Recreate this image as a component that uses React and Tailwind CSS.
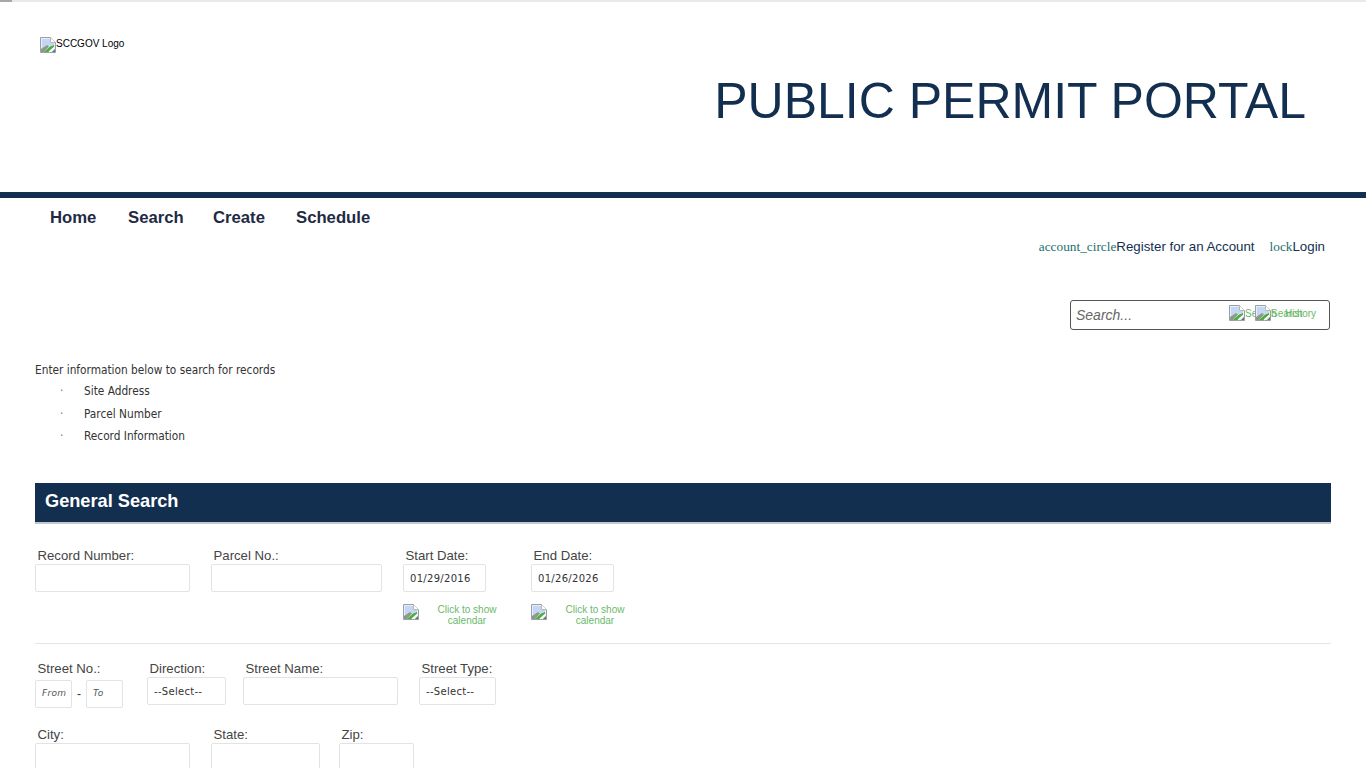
const sans = "font-['Liberation_Sans',Arial,sans-serif]";

function Broken({ className = "" }) {
  return (
    <svg width="16" height="16" viewBox="0 0 16 16" className={"block shrink-0 " + className}>
      <path d="M0.5 0.5H10.5L15.5 5.5V15.5H0.5Z" fill="#e6eefb" stroke="#9aa0a6" />
      <path d="M10.5 0.5V5.5H15.5" fill="#fff" stroke="#b4b8bd" />
      <path d="M2 2H10V6H14V8L9 9L2 13Z" fill="#c3d6f2" />
      <path d="M1 15V12L7 8L9 9.5L4 15Z" fill="#8d9a8a" />
      <path d="M4 15L10 9.5L14 8V10.5L9 15Z" fill="#4cae3c" />
      <path d="M9 15L14 10.5" stroke="#fff" strokeWidth="1.2" />
      <path d="M12 15L15 12V15Z" fill="#6a6f6a" />
    </svg>
  );
}

function Label({ children, className = "" }) {
  return <div className={"text-[13.2px] leading-[15px] whitespace-nowrap text-[#444] pl-[2.5px] " + className}>{children}</div>;
}

function Box({ className = "", children }) {
  return (
    <div className={"h-[28px] border border-[#e3e3e3] rounded-[2px] bg-white flex items-center px-[6px] text-[10px] tracking-[0.3px] text-[#333] font-['DejaVu_Sans',sans-serif] " + className}>
      {children}
    </div>
  );
}

function DateField({ label, value, className = "" }) {
  return (
    <div className={"w-[83px] " + className}>
      <Label>{label}</Label>
      <Box className="w-[83px] mt-[1px]">{value}</Box>
      <div className="flex mt-[12px] w-[110px]">
        <Broken />
        <div className="text-[10px] leading-[11px] text-[#6ab96a] text-center ml-[8px] w-[80px]">Click to show calendar</div>
      </div>
    </div>
  );
}

export default function App() {
  return (
    <div className={"h-screen overflow-hidden bg-white " + sans}>
      <div className="h-[2px] bg-[#e9e9e9] flex">
        <div className="w-[12px] bg-[#a8a8a8]" />
      </div>
      <header className="h-[190px] flex justify-between relative">
        <div className="pl-[40px] pt-[35px] flex items-start">
          <Broken />
          <span className="text-[10px] leading-[13px] text-black">SCCGOV Logo</span>
        </div>
        <h1 className="pr-[60px] pt-[69px] text-[50px] leading-[60px] text-[#122f50] font-normal">PUBLIC PERMIT PORTAL</h1>
      </header>
      <div className="h-[6px] bg-[#122f50]" />
      <nav className="flex pl-[50px] pt-[10px] text-[16.7px] leading-[20px] font-bold text-[#1f2a44]">
        <span className="w-[78px]">Home</span>
        <span className="w-[85px]">Search</span>
        <span className="w-[83px]">Create</span>
        <span>Schedule</span>
      </nav>
      <div className="flex justify-end pr-[41px] mt-[11px] h-[16px] text-[13.3px] leading-[16px] text-[#122f50]">
        <span className="text-[13.3px] text-[#1e6f70] font-['Liberation_Serif',serif]">account_circle</span>
        <span>Register for an Account</span>
        <span className="ml-[15px] text-[13.3px] text-[#1e6f70] font-['Liberation_Serif',serif]">lock</span>
        <span>Login</span>
      </div>
      <div className="flex justify-end pr-[36px] mt-[45px]">
        <div className="w-[260px] h-[30px] border border-[#555] rounded-[3px] flex items-center pl-[5px] relative">
          <span className="text-[14px] italic text-[#666]">Search...</span>
          <div className="absolute left-[158px] top-[4px] flex items-start text-[10px] leading-[17px] text-[#6ab96a]">
            <Broken />
            <span>Search</span>
          </div>
          <div className="absolute left-[184px] top-[4px] flex items-start text-[10px] leading-[17px] text-[#6ab96a]">
            <Broken />
            <span>Search</span>
          </div>
          <span className="absolute left-[214px] top-[4px] text-[10px] leading-[17px] text-[#6ab96a]">History</span>
        </div>
      </div>
      <section className="pl-[35px] mt-[32px] text-[11.75px] text-[#333] font-['DejaVu_Sans_Condensed','DejaVu_Sans',sans-serif]">
        <div className="leading-[16px]">Enter information below to search for records</div>
        <ul className="mt-[5px] pl-[25px] leading-[16px]">
          {["Site Address", "Parcel Number", "Record Information"].map((t, i) => (
            <li key={t} className={"flex " + (i ? "mt-[6.5px]" : "")}>
              <span className="w-[24px] text-[#777]">·</span>
              <span>{t}</span>
            </li>
          ))}
        </ul>
      </section>
      <div className="mx-[35px] mt-[39px] h-[41px] bg-[#122f50] border-b-2 border-[#c4c8cc] flex items-center pl-[10px] pb-[2px]">
        <span className="text-[18.2px] font-bold text-white">General Search</span>
      </div>
      <div className="mx-[35px] mt-[24px] flex items-start border-b border-[#e5e5e5] h-[96px]">
        <div className="w-[155px]">
          <Label>Record Number:</Label>
          <Box className="w-[155px] mt-[1px]" />
        </div>
        <div className="w-[171px] ml-[21px]">
          <Label>Parcel No.:</Label>
          <Box className="w-[171px] mt-[1px]" />
        </div>
        <DateField label="Start Date:" value="01/29/2016" className="ml-[21px]" />
        <DateField label="End Date:" value="01/26/2026" className="ml-[45px]" />
      </div>
      <div className="mx-[35px] mt-[17px] flex items-start">
        <div className="w-[88px]">
          <Label>Street No.:</Label>
          <div className="flex items-center mt-[4px]">
            <Box className="w-[37px] italic !text-[9px] text-[#555]">From</Box>
            <span className="w-[14px] text-center text-[12px] text-[#333]">-</span>
            <Box className="w-[37px] italic !text-[9px] text-[#555]">To</Box>
          </div>
        </div>
        <div className="w-[79px] ml-[24px]">
          <Label>Direction:</Label>
          <Box className="w-[79px] mt-[1px]">--Select--</Box>
        </div>
        <div className="w-[155px] ml-[17px]">
          <Label>Street Name:</Label>
          <Box className="w-[155px] mt-[1px]" />
        </div>
        <div className="w-[77px] ml-[21px]">
          <Label>Street Type:</Label>
          <Box className="w-[77px] mt-[1px]">--Select--</Box>
        </div>
      </div>
      <div className="mx-[35px] mt-[19px] flex items-start">
        <div className="w-[155px]">
          <Label>City:</Label>
          <Box className="w-[155px] mt-[1px]" />
        </div>
        <div className="w-[109px] ml-[21px]">
          <Label>State:</Label>
          <Box className="w-[109px] mt-[1px]" />
        </div>
        <div className="w-[75px] ml-[19px]">
          <Label>Zip:</Label>
          <Box className="w-[75px] mt-[1px]" />
        </div>
      </div>
    </div>
  );
}
